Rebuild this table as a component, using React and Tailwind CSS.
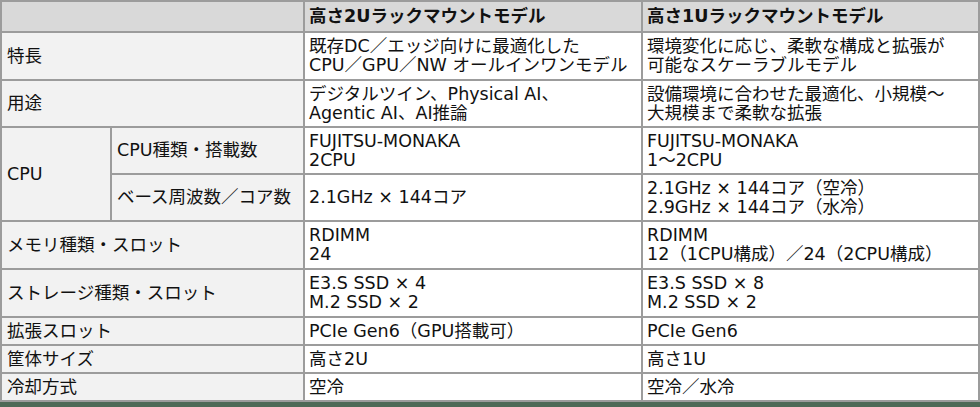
const FONT = "font-['DejaVu_Sans','Noto_Sans_CJK_JP',sans-serif]";

const rows = [
  { label: "特長", h: "h-[48px]", a: ["既存DC／エッジ向けに最適化した", "CPU／GPU／NW オールインワンモデル"], b: ["環境変化に応じ、柔軟な構成と拡張が", "可能なスケーラブルモデル"] },
  { label: "用途", h: "h-[47px]", a: ["デジタルツイン、Physical AI、", "Agentic AI、AI推論"], b: ["設備環境に合わせた最適化、小規模～", "大規模まで柔軟な拡張"] },
];

const rest = [
  { label: "メモリ種類・スロット", h: "h-[48px]", a: ["RDIMM", "24"], b: ["RDIMM", "12（1CPU構成）／24（2CPU構成）"] },
  { label: "ストレージ種類・スロット", h: "h-[48px]", a: ["E3.S SSD × 4", "M.2 SSD × 2"], b: ["E3.S SSD × 8", "M.2 SSD × 2"] },
  { label: "拡張スロット", h: "h-[28px]", a: ["PCIe Gen6（GPU搭載可）"], b: ["PCIe Gen6"] },
  { label: "筐体サイズ", h: "h-[28px]", a: ["高さ2U"], b: ["高さ1U"] },
  { label: "冷却方式", h: "h-[28px]", a: ["空冷"], b: ["空冷／水冷"] },
];

const cell = "border-2 border-[#9c9c9c] px-[4px] align-middle";
const label = `${cell} bg-[#f2f2f2] pl-[5px]`;
const value = `${cell} bg-white`;

function Lines({ lines }) {
  return lines.map((l, i) => (
    <div key={i} className="whitespace-nowrap">{l}</div>
  ));
}

function Row({ r }) {
  return (
    <tr className={r.h}>
      <td colSpan={2} className={label}>{r.label}</td>
      <td className={value}><Lines lines={r.a} /></td>
      <td className={value}><Lines lines={r.b} /></td>
    </tr>
  );
}

export default function App() {
  return (
    <div className={`w-[980px] h-[407px] bg-[#8c918d] overflow-hidden ${FONT}`}>
      <div className="bg-[#4e6a57] h-[407px] w-[980px] flex flex-col">
        <div className="bg-white w-[978px]">
          <table className="border-collapse table-fixed w-[978px] text-[17.5px] leading-[19px] text-[#111]">
            <colgroup>
              <col className="w-[110px]" />
              <col className="w-[193px]" />
              <col className="w-[338px]" />
              <col className="w-[337px]" />
            </colgroup>
            <tbody>
              <tr className="h-[31px] bg-[#d9d9d9] font-bold">
                <td colSpan={2} className={`${cell} bg-[#d9d9d9]`}></td>
                <td className={`${cell} bg-[#d9d9d9]`}>高さ2Uラックマウントモデル</td>
                <td className={`${cell} bg-[#d9d9d9]`}>高さ1Uラックマウントモデル</td>
              </tr>
              {rows.map((r) => <Row key={r.label} r={r} />)}
              <tr className="h-[47px]">
                <td rowSpan={2} className={label}>CPU</td>
                <td className={label}>CPU種類・搭載数</td>
                <td className={value}><Lines lines={["FUJITSU-MONAKA", "2CPU"]} /></td>
                <td className={value}><Lines lines={["FUJITSU-MONAKA", "1～2CPU"]} /></td>
              </tr>
              <tr className="h-[47px]">
                <td className={label}>ベース周波数／コア数</td>
                <td className={value}><Lines lines={["2.1GHz × 144コア"]} /></td>
                <td className={value}><Lines lines={["2.1GHz × 144コア（空冷）", "2.9GHz × 144コア（水冷）"]} /></td>
              </tr>
              {rest.map((r) => <Row key={r.label} r={r} />)}
            </tbody>
          </table>
        </div>
      </div>
    </div>
  );
}
